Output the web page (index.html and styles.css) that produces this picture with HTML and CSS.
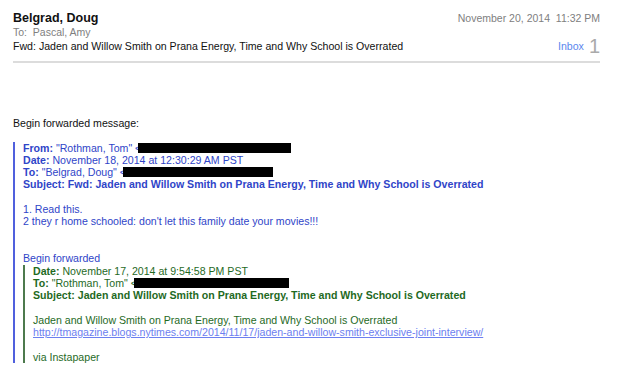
FILE: index.html
```html
<!DOCTYPE html>
<html lang="en">
<head>
    <meta charset="UTF-8">
    <title>Fwd: Jaden and Willow Smith on Prana Energy</title>
    <link rel="stylesheet" href="styles.css">
</head>
<body>
    <div class="header">
        <div class="row">
            <span class="sender">Belgrad, Doug</span>
            <span class="date">November 20, 2014&nbsp;&nbsp;11:32 PM</span>
        </div>
        <div class="row to">To:&nbsp;&nbsp;Pascal, Amy</div>
        <div class="row">
            <span class="subject">Fwd: Jaden and Willow Smith on Prana Energy, Time and Why School is Overrated</span>
            <span class="mailbox"><span class="inbox">Inbox</span><span class="count">1</span></span>
        </div>
    </div>

    <div class="message">
        Begin forwarded message:<br><br>
        <blockquote class="quote blue">
            <b>From:</b> "Rothman, Tom" &lt;<span class="redact r1"></span><br>
            <b>Date:</b> November 18, 2014 at 12:30:29 AM PST<br>
            <b>To:</b> "Belgrad, Doug" &lt;<span class="redact r2"></span><br>
            <b>Subject: Fwd: Jaden and Willow Smith on Prana Energy, Time and Why School is Overrated</b><br>
            <br>
            1. Read this.<br>
            2 they r home schooled: don't let this family date your movies!!!<br>
            <br><br>
            Begin forwarded
            <blockquote class="quote green">
                <b>Date:</b> November 17, 2014 at 9:54:58 PM PST<br>
                <b>To:</b> "Rothman, Tom" &lt;<span class="redact r3"></span><br>
                <b>Subject: Jaden and Willow Smith on Prana Energy, Time and Why School is Overrated</b><br>
                <br>
                Jaden and Willow Smith on Prana Energy, Time and Why School is Overrated<br>
                <a href="#">http://tmagazine.blogs.nytimes.com/2014/11/17/jaden-and-willow-smith-exclusive-joint-interview/</a><br>
                <br>
                via Instapaper
            </blockquote>
        </blockquote>
    </div>
</body>
</html>
```

FILE: styles.css
```css
body {
    margin: 0;
    font-family: "Liberation Sans", Arial, sans-serif;
    font-size: 10.6px;
    color: #111;
}
.header {
    margin: 0 18px 0 13px;
    padding: 11px 0 8px;
    border-bottom: 2px solid #dcdcdc;
}
.row {
    display: flex;
    justify-content: space-between;
    align-items: center;
    line-height: 14px;
}
.sender {
    font-weight: bold;
    font-size: 12.5px;
}
.date, .to {
    color: #808080;
    font-size: 10.5px;
}
.mailbox {
    display: flex;
    align-items: center;
}
.inbox {
    color: #5b87ee;
}
.count {
    color: #aaa;
    font-size: 20px;
    margin-left: 5px;
}
.message {
    padding: 54px 0 0 13px;
    line-height: 12.3px;
}
.quote {
    margin: 0;
    padding-left: 8px;
}
.blue {
    color: #2f45c8;
    border-left: 2px solid #5060dd;
}
.green {
    color: #1f6a1f;
    border-left: 2px solid #4d7a4d;
}
.green a {
    color: #6c80f0;
}
.redact {
    display: inline-block;
    height: 10px;
    background: #000;
    vertical-align: -1px;
    margin-left: -3px;
}
.r1 { width: 153px; }
.r2 { width: 150px; }
.r3 { width: 155px; }
```
